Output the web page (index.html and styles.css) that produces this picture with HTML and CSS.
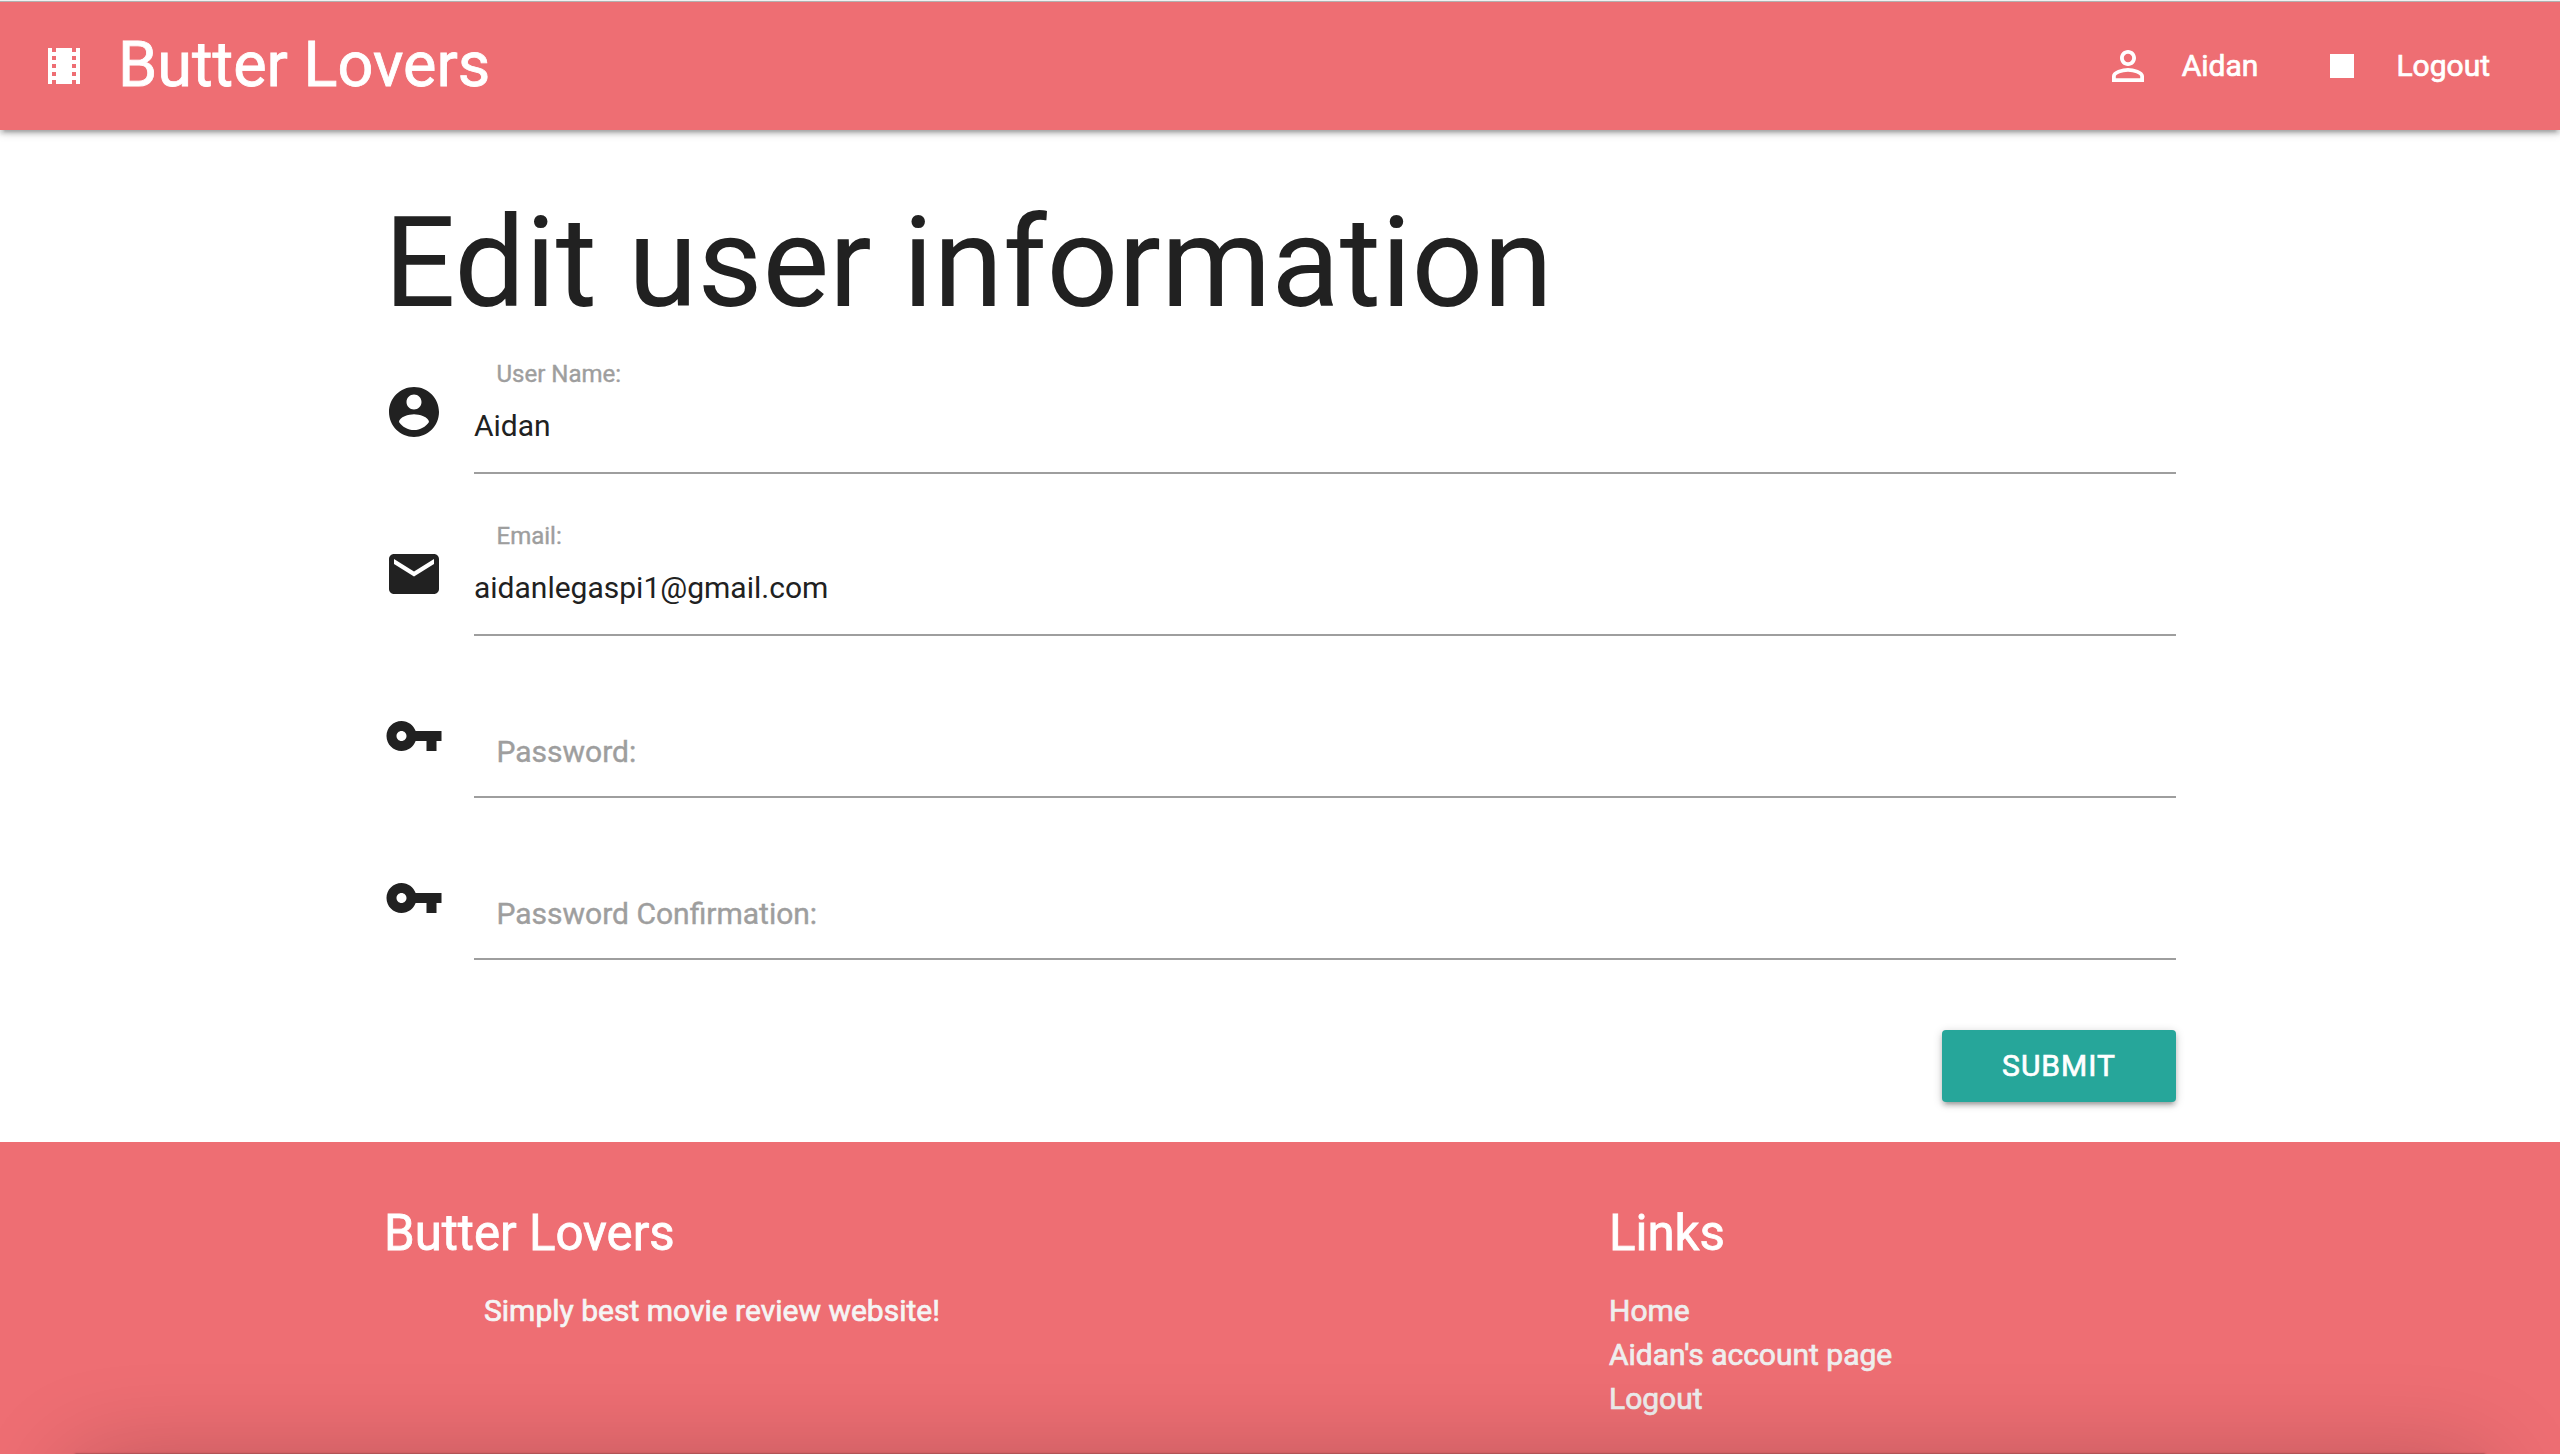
FILE: index.html
```html
<!DOCTYPE html>
<html lang="en">
<head>
<meta charset="utf-8">
<title>Butter Lovers</title>
<link rel="stylesheet" href="styles.css">
</head>
<body>
<nav class="navbar">
  <a class="brand">
    <svg class="icon" viewBox="0 0 24 24"><path d="M18 3v2h-2V3H8v2H6V3H4v18h2v-2h2v2h8v-2h2v2h2V3h-2zM8 17H6v-2h2v2zm0-4H6v-2h2v2zm0-4H6V7h2v2zm10 8h-2v-2h2v2zm0-4h-2v-2h2v2zm0-4h-2V7h2v2z"/></svg>
    <span class="brand-name">Butter Lovers</span>
  </a>
  <div class="nav-links">
    <a class="nav-link">
      <svg class="icon" viewBox="0 0 24 24"><path d="M12 5.9a2.1 2.1 0 1 1 0 4.2 2.1 2.1 0 0 1 0-4.2m0 9c2.97 0 6.1 1.46 6.1 2.1v1.1H5.9V17c0-.64 3.13-2.1 6.1-2.1M12 4C9.79 4 8 5.79 8 8s1.79 4 4 4 4-1.79 4-4-1.79-4-4-4zm0 9c-2.67 0-8 1.34-8 4v3h16v-3c0-2.66-5.33-4-8-4z"/></svg>
      <span class="nav-text">Aidan</span>
    </a>
    <a class="nav-link">
      <svg class="icon" viewBox="0 0 24 24"><path d="M6 6h12v12H6z"/></svg>
      <span class="nav-text">Logout</span>
    </a>
  </div>
</nav>

<main class="container">
  <h1 class="title">Edit user information</h1>
  <form class="form">
    <div class="field">
      <svg class="field-icon" viewBox="0 0 24 24"><path d="M12 2C6.48 2 2 6.48 2 12s4.48 10 10 10 10-4.48 10-10S17.520 2 12 2zm0 3c1.660 0 3 1.340 3 3s-1.340 3-3 3-3-1.340-3-3 1.340-3 3-3zm0 14.200c-2.500 0-4.710-1.280-6-3.220.030-1.990 4-3.080 6-3.080 1.990 0 5.970 1.090 6 3.080-1.290 1.940-3.500 3.220-6 3.220z"/></svg>
      <div class="control">
        <label class="label label-active">User Name:</label>
        <div class="value">Aidan</div>
      </div>
    </div>
    <div class="field">
      <svg class="field-icon" viewBox="0 0 24 24"><path d="M20 4H4c-1.100 0-1.990.900-1.990 2L2 18c0 1.100.900 2 2 2h16c1.100 0 2-.900 2-2V6c0-1.100-.900-2-2-2zm0 4l-8 5-8-5V6l8 5 8-5v2z"/></svg>
      <div class="control">
        <label class="label label-active">Email:</label>
        <div class="value">aidanlegaspi1@gmail.com</div>
      </div>
    </div>
    <div class="field">
      <svg class="field-icon" viewBox="0 0 24 24"><path d="M12.650 10C11.830 7.670 9.610 6 7 6c-3.310 0-6 2.690-6 6s2.690 6 6 6c2.610 0 4.830-1.670 5.650-4H17v4h4v-4h2v-4H12.650zM7 14c-1.100 0-2-.900-2-2s.900-2 2-2 2 .900 2 2-.900 2-2 2z"/></svg>
      <div class="control">
        <label class="label">Password:</label>
      </div>
    </div>
    <div class="field">
      <svg class="field-icon" viewBox="0 0 24 24"><path d="M12.650 10C11.830 7.670 9.610 6 7 6c-3.310 0-6 2.690-6 6s2.690 6 6 6c2.610 0 4.830-1.670 5.650-4H17v4h4v-4h2v-4H12.650zM7 14c-1.100 0-2-.900-2-2s.900-2 2-2 2 .900 2 2-.900 2-2 2z"/></svg>
      <div class="control">
        <label class="label">Password Confirmation:</label>
      </div>
    </div>
    <button class="submit" type="button">SUBMIT</button>
  </form>
</main>

<footer class="footer">
  <div class="container footer-grid">
    <section>
      <h5 class="footer-title">Butter Lovers</h5>
      <p class="tagline">Simply best movie review website!</p>
    </section>
    <section>
      <h5 class="footer-title">Links</h5>
      <ul class="links">
        <li>Home</li>
        <li>Aidan's account page</li>
        <li>Logout</li>
      </ul>
    </section>
  </div>
  <div class="dock-shadow"></div>
</footer>
</body>
</html>
```

FILE: styles.css
```css
* { box-sizing: border-box; }

body {
  margin: 0;
  height: 1454px;
  overflow: hidden;
  display: flex;
  flex-direction: column;
  background: #fff;
  color: #212121;
  font: 400 30px/1.5 Roboto, "Liberation Sans", sans-serif;
}

.navbar {
  position: relative;
  flex: none;
  height: 130px;
  padding: 2px 70px 0 40px;
  display: flex;
  justify-content: space-between;
  background: linear-gradient(#f0f0f0 1px, #b0b0b0 1px 2px, #ee6e73 2px);
  color: #fff;
  box-shadow: 0 4px 4px 0 rgba(0, 0, 0, .14), 0 6px 2px -4px rgba(0, 0, 0, .12), 0 2px 10px 0 rgba(0, 0, 0, .2);
}

.brand, .nav-links, .nav-link {
  display: flex;
  align-items: center;
}

.brand-name {
  margin-left: 30px;
  padding-bottom: 3px;
  font-size: 63px;
  line-height: 125px;
  -webkit-text-stroke: .8px currentColor;
}

.nav-links { gap: 60px; }
.nav-link { gap: 30px; }

.nav-text {
  padding-bottom: 2px;
  -webkit-text-stroke: .7px currentColor;
}

.icon {
  width: 48px;
  height: 48px;
  fill: currentColor;
}

.container {
  width: 70%;
  margin: 0 auto;
}

.title {
  margin: 84px 0 0;
  font-size: 126px;
  font-weight: 400;
  line-height: 98px;
  letter-spacing: -.1px;
}

.form {
  display: flex;
  flex-direction: column;
}

.field {
  height: 162px;
  display: grid;
  grid-template-columns: 90px 1fr;
}

.field-icon {
  width: 60px;
  height: 60px;
  margin-top: 70px;
  fill: #212121;
}

.control {
  display: flex;
  flex-direction: column;
  justify-content: flex-end;
  border-bottom: 2px solid #9e9e9e;
}

.label {
  padding: 0 0 26px 22.5px;
  line-height: 36px;
  color: #9e9e9e;
  -webkit-text-stroke: .4px currentColor;
}

.label-active {
  padding-bottom: 16px;
  font-size: 24px;
}

.value {
  padding-bottom: 28px;
  line-height: 36px;
}

.submit {
  align-self: flex-end;
  width: 234px;
  height: 72px;
  margin: 70px 0 40px;
  padding: 0;
  border: 0;
  border-radius: 4px;
  background: #26a69a;
  color: #fff;
  font: inherit;
  line-height: 72px;
  letter-spacing: 1px;
  -webkit-text-stroke: .7px currentColor;
  box-shadow: 0 4px 4px 0 rgba(0, 0, 0, .14), 0 6px 2px -4px rgba(0, 0, 0, .12), 0 2px 10px 0 rgba(0, 0, 0, .2);
}

.footer {
  position: relative;
  flex: 1;
  min-height: 0;
  overflow: hidden;
  padding-top: 64px;
  background: #ee6e73;
}

.footer-grid {
  display: grid;
  grid-template-columns: 1225px 1fr;
}

.footer-title {
  margin: 0 0 29px;
  font-size: 49.2px;
  font-weight: 400;
  line-height: 54px;
  color: #fff;
  -webkit-text-stroke: .8px currentColor;
}

.tagline {
  margin: 0;
  padding-left: 100px;
  line-height: 44px;
  color: #f5f5f5;
  -webkit-text-stroke: .7px currentColor;
}

.links {
  margin: 0;
  padding: 0;
  list-style: none;
  line-height: 44px;
  color: #eee;
  -webkit-text-stroke: .7px currentColor;
}

/* soft shade rising from the bottom edge of the window */
.dock-shadow {
  position: absolute;
  top: 100%;
  left: 75px;
  right: 75px;
  height: 200px;
  box-shadow: 0 0 2px 0 rgba(0, 0, 0, .5), 0 10px 100px 0 rgba(0, 0, 0, .24);
}
```
